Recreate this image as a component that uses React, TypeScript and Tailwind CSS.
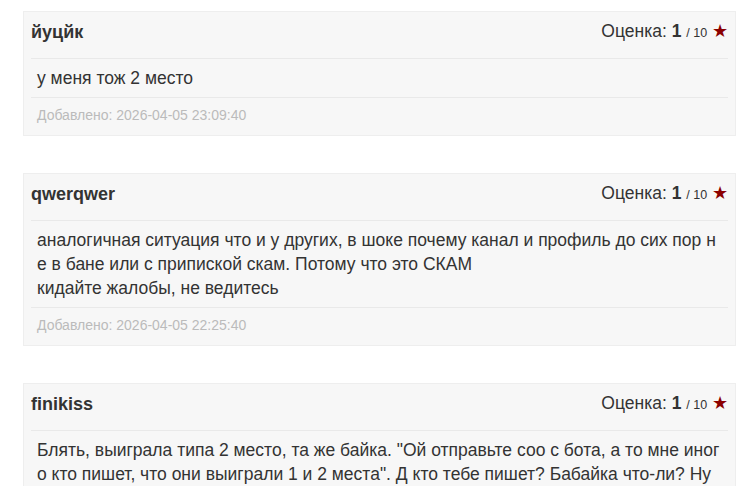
import React from "react";

type Review = {
  id: number;
  author: string;
  score: number;
  text: string[];
  date: string;
};

const reviews: Array<Review> = [
  {
    id: 1,
    author: "йуцйк",
    score: 1,
    text: ["у меня тож 2 место"],
    date: "2026-04-05 23:09:40",
  },
  {
    id: 2,
    author: "qwerqwer",
    score: 1,
    text: [
      "аналогичная ситуация что и у других, в шоке почему канал и профиль до сих пор не в бане или с припиской скам. Потому что это СКАМ",
      "кидайте жалобы, не ведитесь",
    ],
    date: "2026-04-05 22:25:40",
  },
  {
    id: 3,
    author: "finikiss",
    score: 1,
    text: [
      "Блять, выиграла типа 2 место, та же байка. \"Ой отправьте соо с бота, а то мне иного кто пишет, что они выиграли 1 и 2 места\". Д кто тебе пишет? Бабайка что-ли? Ну и ладно, кидайте жалобы",
    ],
    date: "2026-04-05 21:10:12",
  },
];

const App = (): JSX.Element => {
  return (
    <div className="min-h-screen bg-white pl-[23px] pr-[11px] pt-[11px] font-['Liberation_Sans',Arial,sans-serif] text-[#333]">
      {reviews.map((review) => {
        return (
          <div
            key={review.id}
            className="mb-[37px] border border-[#eeeeee] bg-[#f7f7f7] px-[7px]"
          >
            <div className="flex items-center justify-between border-b border-[#e9e9e9] pt-[8px] pb-[14px]">
              <span className="text-[18px] font-bold leading-[22px] text-[#333]">
                {review.author}
              </span>
              <span className="text-[17.5px] leading-[22px] text-[#333]">
                Оценка: <b className="text-[17.5px]">{review.score}</b>{" "}
                <span className="text-[12.5px]">/ 10</span>{" "}
                <span className="text-[#8b0000]">★</span>
              </span>
            </div>
            <div className="border-b border-[#e9e9e9] py-[7px] pl-[6px] pr-[6px] text-[17.5px] leading-[24px] break-all text-[#333]">
              {review.text.map((line, index) => (
                <p key={index}>{line}</p>
              ))}
            </div>
            <p className="pl-[6px] pt-[8px] pb-[11px] text-[14px] leading-[18px] text-[#bbbbbb]">
              Добавлено: {review.date}
            </p>
          </div>
        );
      })}
    </div>
  );
};

export default App;
